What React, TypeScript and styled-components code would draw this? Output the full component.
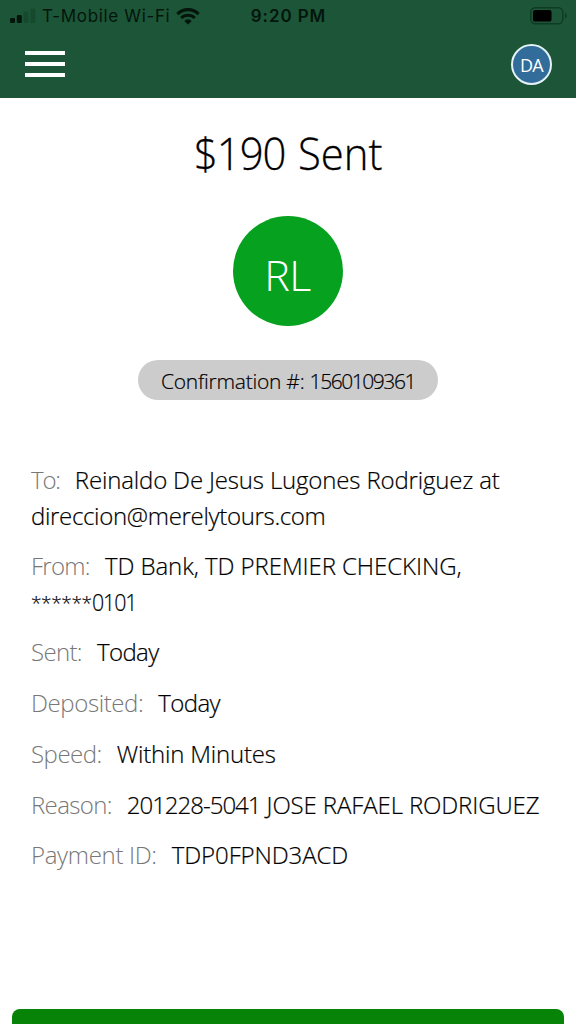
import React from "react";
import styled, { createGlobalStyle } from "styled-components";

interface Part {
    text: string;
    spacing: number;
    size?: number;
    scale?: number;
}

interface Detail {
    label: string;
    labelSpacing: number;
    lines: Array<Array<Part>>;
}

const details: Array<Detail> = [
    {
        label: "To:",
        labelSpacing: -1.2,
        lines: [
            [{ text: "Reinaldo De Jesus Lugones Rodriguez at", spacing: -0.16 }],
            [{ text: "direccion@merelytours.com", spacing: -0.32 }],
        ]
    },
    {
        label: "From:",
        labelSpacing: -0.7,
        lines: [
            [{ text: "TD Bank, TD PREMIER CHECKING,", spacing: -0.07 }],
            [{ text: "******", spacing: -0.35, size: 19 }, { text: "0101", spacing: -1.2, scale: 0.89 }],
        ]
    },
    { label: "Sent:", labelSpacing: -0.65, lines: [[{ text: "Today", spacing: -0.6 }]] },
    { label: "Deposited:", labelSpacing: -0.4, lines: [[{ text: "Today", spacing: -0.6 }]] },
    { label: "Speed:", labelSpacing: -0.5, lines: [[{ text: "Within Minutes", spacing: -0.2 }]] },
    {
        label: "Reason:",
        labelSpacing: -0.65,
        lines: [
            [{ text: "201228-5041", spacing: -1 }, { text: " JOSE RAFAEL RODRIGUEZ", spacing: -0.12 }],
        ]
    },
    { label: "Payment ID:", labelSpacing: -0.32, lines: [[{ text: "TDP0FPND3ACD", spacing: -0.1 }]] },
]

export default function App() {
    return (
        <>
            <GlobalStyle />
            <Screen>
                <Header>
                    <StatusBar />
                    <NavBar>
                        <MenuButton type="button" title="Menu">
                            <MenuLine />
                            <MenuLine />
                            <MenuLine />
                        </MenuButton>
                        <UserBadge>DA</UserBadge>
                    </NavBar>
                </Header>
                <Summary>
                    <Title><Amount>$190</Amount> Sent</Title>
                    <Recipient>RL</Recipient>
                    <Confirmation>Confirmation #: <ConfirmationNumber>1560109361</ConfirmationNumber></Confirmation>
                </Summary>
                <DetailList>
                    {details.map(data => <DetailRow key={data.label} {...data} />)}
                </DetailList>
                <DoneButton type="button" aria-label="Done" />
            </Screen>
        </>
    );
}

const StatusBar = () => {
    return (
        <StyledStatusBar>
            <Carrier>
                <svg width="26" height="16" viewBox="0 0 26 16">
                    <rect x="0" y="10" width="5" height="5" rx="1.2" fill="#04150b" />
                    <rect x="6.8" y="7" width="5" height="8" rx="1.2" fill="#04150b" />
                    <rect x="13.6" y="3.5" width="5" height="11.5" rx="1.2" fill="#164a2e" />
                    <rect x="20.4" y="0.5" width="5" height="14.5" rx="1.2" fill="#164a2e" />
                </svg>
                <CarrierName>T-Mobile Wi-Fi</CarrierName>
                <svg width="24" height="17" viewBox="0 0 24 17" fill="none" stroke="#04150b">
                    <path d="M1.4 6.1A15 15 0 0 1 22.6 6.1" strokeWidth="3.2" />
                    <path d="M5.2 10A9.6 9.6 0 0 1 18.8 10" strokeWidth="3" />
                    <path d="M12 16.6L8.3 12.9A5.2 5.2 0 0 1 15.7 12.9Z" fill="#04150b" stroke="none" />
                </svg>
            </Carrier>
            <Clock>9:20 PM</Clock>
            <Battery>
                <svg width="37" height="18" viewBox="0 0 37 18">
                    <rect x="0.8" y="0.8" width="32" height="16" rx="4.5" fill="none" stroke="#0f3a23" strokeWidth="1.4" />
                    <rect x="3" y="3" width="18.5" height="11.6" rx="2.2" fill="#000" />
                    <path d="M35 6v5.6c1.2-.5 1.8-1.5 1.8-2.8s-.6-2.3-1.8-2.8z" fill="#0f3a23" />
                </svg>
            </Battery>
        </StyledStatusBar>
    );
}

const DetailRow = (props: Detail) => {
    return (
        <Row>
            <Label $spacing={props.labelSpacing}>{props.label}</Label>
            {props.lines.map((line, i) => (
                <React.Fragment key={i}>
                    {i > 0 && <br />}
                    {line.map(part => (
                        <Value key={part.text} $spacing={part.spacing} $size={part.size} $scale={part.scale}>
                            {part.text}
                        </Value>
                    ))}
                </React.Fragment>
            ))}
        </Row>
    );
}

const GlobalStyle = createGlobalStyle`
    * {
        box-sizing: border-box;
    }
    body {
        margin: 0;
        background: #fff;
        font-family: "Open Sans", "Noto Sans", sans-serif;
        font-weight: 300;
        color: #000;
    }
`

const Screen = styled.div`
    display: flex;
    flex-direction: column;
    width: 576px;
    height: 1024px;
    overflow: hidden;
    background: #fff;
`

const Header = styled.header`
    height: 98px;
    flex-shrink: 0;
    background: #1c5537;
`

const StyledStatusBar = styled.div`
    display: grid;
    grid-template-columns: 1fr auto 1fr;
    align-items: center;
    height: 32px;
    padding: 0 9px 0 10px;
    font-family: Inter, "Liberation Sans", sans-serif;
    font-size: 17px;
    color: #04150b;
`

const Carrier = styled.div`
    display: flex;
    align-items: center;
`

const CarrierName = styled.span`
    margin: 0 6px 0 6px;
    font-weight: 400;
    letter-spacing: 0.65px;
    white-space: nowrap;
`

const Clock = styled.span`
    font-weight: 600;
    letter-spacing: 0.9px;
`

const Battery = styled.div`
    display: flex;
    justify-content: flex-end;
`

const NavBar = styled.div`
    display: flex;
    align-items: center;
    justify-content: space-between;
    height: 65px;
    padding: 0 24px 0 25px;
`

const MenuButton = styled.button`
    display: flex;
    flex-direction: column;
    gap: 7px;
    padding: 0;
    margin-bottom: 2px;
    border: 0;
    background: none;
`

const MenuLine = styled.span`
    width: 40px;
    height: 4px;
    background: #fff;
`

const UserBadge = styled.div`
    display: flex;
    align-items: center;
    justify-content: center;
    width: 41px;
    height: 41px;
    border: 2px solid #e4f2f4;
    border-radius: 50%;
    background: #326c9b;
    color: #fff;
    font-size: 18px;
    font-weight: 400;
    letter-spacing: -0.6px;
`

const Summary = styled.section`
    display: flex;
    flex-direction: column;
    align-items: center;
`

const Title = styled.h1`
    margin: 23px 0 0;
    font-size: 45px;
    line-height: 63px;
    font-weight: 300;
    word-spacing: 2px;
    transform: scaleX(0.93);
    -webkit-text-stroke: 0.3px #000;
`

const Amount = styled.span`
    letter-spacing: -1.2px;
`

const Recipient = styled.div`
    width: 110px;
    height: 110px;
    margin-top: 32px;
    padding: 4px 1px 0 0;
    border-radius: 50%;
    background: #06a11f;
    color: #fff;
    font-size: 43px;
    line-height: 109px;
    letter-spacing: -0.5px;
    text-align: center;
`

const Confirmation = styled.div`
    width: 300px;
    height: 40px;
    margin-top: 34px;
    border-radius: 20px;
    background: #ccc;
    font-size: 21px;
    line-height: 43px;
    letter-spacing: -0.25px;
    text-align: center;
    white-space: nowrap;
    -webkit-text-stroke: 0.2px #000;
`

const ConfirmationNumber = styled.span`
    letter-spacing: -1.45px;
`

const DetailList = styled.div`
    display: flex;
    flex-direction: column;
    gap: 15.3px;
    padding: 62.2px 0 0 31px;
`

const Row = styled.div`
    font-size: 24px;
    line-height: 35.4px;
    white-space: nowrap;
`

const Label = styled.span<{ $spacing: number }>`
    margin-right: 15px;
    color: #777;
    letter-spacing: ${props => props.$spacing}px;
`

const Value = styled.span<{ $spacing: number, $size?: number, $scale?: number }>`
    letter-spacing: ${props => props.$spacing}px;
    white-space: pre;
    -webkit-text-stroke: 0.2px #000;
    ${props => props.$size && `
        font-size: ${props.$size}px;
        line-height: 1;
        vertical-align: 1px;
    `}
    ${props => props.$scale && `
        display: inline-block;
        line-height: 1;
        transform: scaleX(${props.$scale});
        transform-origin: left;
    `}
`

const DoneButton = styled.button`
    flex-shrink: 0;
    height: 60px;
    margin: 136.4px 12px 0;
    border: 0;
    border-radius: 8px;
    background: #078307;
`
